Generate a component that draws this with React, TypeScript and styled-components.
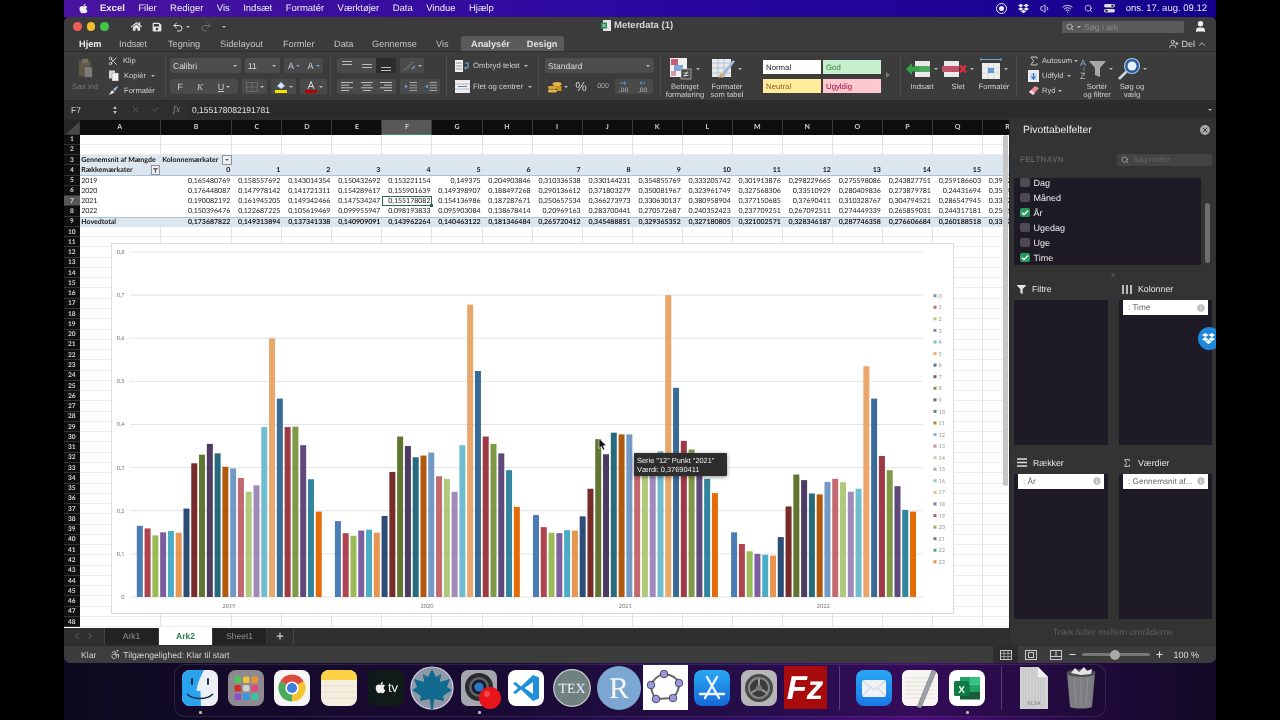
import React from 'react';
import styled, { createGlobalStyle } from 'styled-components';
import { FaApple, FaDropbox, FaHome, FaSave, FaFilter } from 'react-icons/fa';
import { Undo2, Redo2, Scissors, X, Check, Plus, Minus, Search, ChevronLeft, ChevronRight, ChevronUp, Sigma, Accessibility, Wifi, Volume1, Info, UserPlus, User } from 'lucide-react';

const Global = createGlobalStyle`
  html, body { margin: 0; padding: 0; background: #000; width: 1280px; height: 720px; overflow: hidden; }
  * { box-sizing: border-box; }
  body { font-family: "Liberation Sans", Arial, sans-serif; text-rendering: geometricPrecision; }
`;

const Screen = styled.div`
  width: 1152px; height: 720px; margin: 0 auto; display: flex; flex-direction: column; overflow: hidden;
  position: relative; filter: blur(0.3px); background: #1a0a33;
`;
const MenuBar = styled.div`
  height: 17px; flex: none; display: flex; align-items: center; padding: 0 9px 0 14px; color: #eee; font-size: 9.5px;
  background: linear-gradient(90deg, #4a14a0, #2a08a0 50%, #14008c);
`;
const MenuItem = styled.span<{ $bold?: boolean; $ml?: number }>`
  font-weight: ${p => (p.$bold ? 700 : 400)}; margin-left: ${p => p.$ml ?? 13.4}px; white-space: nowrap;
`;
const MenuRight = styled.div`
  margin-left: auto; display: flex; align-items: center; gap: 11px; font-size: 9.5px; color: #e8e8ee;
`;
const RecordDot = styled.span`
  width: 11px; height: 11px; border-radius: 50%; border: 1.5px solid #eee; display: flex; align-items: center; justify-content: center;
  &::after { content: ''; width: 5px; height: 5px; border-radius: 50%; background: #eee; }
`;
const Window = styled.div`
  height: 646px; flex: none; display: flex; flex-direction: column; background: #3a3a3a; border-radius: 6px 6px 7px 7px; overflow: hidden; position: relative;
`;
const TitleBar = styled.div`
  height: 19px; flex: none; display: flex; align-items: center; position: relative; padding-left: 9px; background: #3b3b3b; color: #ddd;
`;
const Light = styled.span<{ $c: string }>`
  width: 8.5px; height: 8.5px; border-radius: 50%; background: ${p => p.$c}; margin-right: 5px; flex: none;
`;
const QuickIcons = styled.div`
  display: flex; align-items: center; gap: 10px; margin-left: 17px; color: #ddd;
`;
const QuickBtn = styled.span<{ $dim?: boolean }>`
  display: flex; align-items: center; gap: 2px; color: ${p => (p.$dim ? '#6e6e6e' : '#e2e2e2')};
`;
const Caret = styled.span<{ $c?: string }>`
  width: 0; height: 0; flex: none; border-left: 2px solid transparent; border-right: 2px solid transparent; border-top: 2.5px solid ${p => p.$c ?? '#bbb'};
`;
const DocTitle = styled.div`
  position: absolute; left: 537px; top: 3px; display: flex; align-items: center; gap: 3px; font-size: 9.5px; font-weight: 700; color: #d6d6d6;
`;
const SheetSearch = styled.div`
  margin-left: auto; margin-right: 32px; width: 122px; height: 12px; background: #5a5a5a; border-radius: 1px; display: flex; align-items: center; gap: 3px; padding-left: 4px; font-size: 8.5px; color: #8c8c8c;
`;
const TitleUser = styled.span`
  position: absolute; right: 9px; top: 3px; color: #eee; display: flex;
`;
const TabRow = styled.div`
  height: 15px; flex: none; display: flex; align-items: stretch; background: #3b3b3b; font-size: 9.2px; color: #c4c4c4; padding-left: 15px; position: relative;
`;
const Tab = styled.span<{ $active?: boolean; $w: number }>`
  width: ${p => p.$w}px; flex: none; display: flex; align-items: center; white-space: nowrap;
  font-weight: ${p => (p.$active ? 700 : 400)}; color: ${p => (p.$active ? '#f0f0f0' : 'inherit')};
`;
const ContextTabs = styled.div`
  display: flex; align-items: center; margin-left: 25px; padding-left: 10px; width: 103px; background: #5b5b5b; border-radius: 3px 3px 0 0; color: #e4e4e4; font-weight: 700;
`;
const ContextTab = styled.span`
  margin-right: 17px; white-space: nowrap;
`;
const ShareBox = styled.div`
  position: absolute; right: 9px; top: 0; height: 15px; display: flex; align-items: center; gap: 2px; color: #d8d8d8; font-size: 9px;
`;
const Ribbon = styled.div`
  height: 49px; flex: none; display: flex; align-items: stretch; background: #3c3c3c; border-top: 1px solid #2f2f2f; font-size: 7.6px; color: #c8c8c8;
`;
const Sep = styled.span`
  width: 1px; flex: none; background: #4c4c4c; margin: 3px 0;
`;
const Group = styled.div<{ $w: number; $pl?: number }>`
  width: ${p => p.$w}px; flex: none; padding-left: ${p => p.$pl ?? 0}px; display: flex; align-items: stretch; position: relative;
`;
const PasteCol = styled.div`
  width: 44px; display: flex; flex-direction: column; align-items: center; padding-top: 6px; color: #777; gap: 4px; padding-right: 2px;
`;
const SmallCol = styled.div`
  display: flex; flex-direction: column; justify-content: space-between; padding: 2px 0 2px; height: 47px;
`;
const SmallBtn = styled.div<{ $gap?: number }>`
  display: flex; align-items: center; gap: ${p => p.$gap ?? 5}px; white-space: nowrap; color: #d0d0d0; height: 13px;
`;
const CaretGap = styled.span`
  margin-left: 2px; display: flex;
`;
const StackCol = styled.div<{ $gap?: number }>`
  display: flex; flex-direction: column; gap: ${p => p.$gap ?? 6}px; padding-top: 6px;
`;
const RowFlex = styled.div<{ $gap?: number }>`
  display: flex; align-items: center; gap: ${p => p.$gap ?? 4}px;
`;
const SelectBox = styled.div<{ $w: number }>`
  width: ${p => p.$w}px; height: 15px; background: #4d4d4d; border-radius: 2px; display: flex; align-items: center; justify-content: space-between; padding: 0 4px 0 3px; font-size: 8.5px; color: #dcdcdc;
`;
const Seg = styled.div<{ $w: number; $on?: boolean }>`
  width: ${p => p.$w}px; height: 15px; flex: none; background: ${p => (p.$on ? '#2c2c2c' : '#4a4a4a')}; display: flex; align-items: center; justify-content: center; gap: 2px; color: #c9c9c9; font-size: 9px;
  &:first-child { border-radius: 2px 0 0 2px; }
  &:last-child { border-radius: 0 2px 2px 0; }
`;
const PlainBtn = styled.div<{ $w: number }>`
  width: ${p => p.$w}px; height: 15px; flex: none; display: flex; align-items: center; justify-content: center; gap: 2px;
`;
const SegGroup = styled.div`
  display: flex;
`;
const Italic = styled.span`
  font-family: "Liberation Serif", serif; font-style: italic;
`;
const Under = styled.span`
  text-decoration: underline;
`;
const Percent = styled.span`
  font-size: 13px; color: #d4d4d4;
`;
const Tiny = styled.span`
  font-size: 7px; color: #aaa;
`;
const WrapRow = styled.div`
  display: flex; align-items: center; gap: 3px; white-space: nowrap; font-size: 7.8px; color: #d0d0d0; height: 19px;
`;
const WrapCol = styled.div`
  display: flex; flex-direction: column; padding-top: 4px; gap: 2px;
`;
const BigBtn = styled.div<{ $w: number }>`
  width: ${p => p.$w}px; flex: none; display: flex; flex-direction: column; align-items: center; padding-top: 5px; line-height: 8.4px; text-align: center; color: #cfcfcf; white-space: pre-line;
`;
const BigIconRow = styled.div`
  display: flex; align-items: center; gap: 2px; height: 23px; margin-bottom: 2.5px;
`;
const StylesBox = styled.div`
  display: grid; grid-template-columns: 58px 58px; grid-auto-rows: 14px; gap: 5px 2px; margin: 8px 0 0 16px; height: 33px;
`;
const StyleCell = styled.div<{ $bg: string; $c: string }>`
  background: ${p => p.$bg}; color: ${p => p.$c}; font-size: 7.8px; display: flex; align-items: center; padding-left: 3px;
`;
const StylesArrow = styled.span`
  margin: 20px 0 0 5px; width: 0; height: 0; border-top: 3px solid transparent; border-bottom: 3px solid transparent; border-left: 4px solid #777;
`;
const FormulaBar = styled.div`
  height: 19px; flex: none; display: flex; align-items: center; background: #2f2f2f; font-size: 8.5px; color: #ddd; border-top: 1px solid #2a2a2a; padding-bottom: 1px;
`;
const CellRef = styled.span`
  width: 47px; padding-left: 7px; flex: none;
`;
const Stepper = styled.span`
  width: 8px; display: flex; flex-direction: column; gap: 2px; align-items: center; flex: none;
  &::before { content: ''; border-left: 2px solid transparent; border-right: 2px solid transparent; border-bottom: 3px solid #bbb; }
  &::after { content: ''; border-left: 2px solid transparent; border-right: 2px solid transparent; border-top: 3px solid #bbb; }
`;
const FxTools = styled.span`
  display: flex; align-items: center; gap: 11px; margin-left: 12px; width: 56px; color: #666; flex: none;
`;
const Fx = styled.span`
  font-family: "Liberation Serif", serif; font-style: italic; font-size: 10px; color: #8a8a8a; margin-left: 2px;
`;
const FormulaInput = styled.div`
  flex: 1; height: 16px; display: flex; align-items: center; justify-content: space-between; padding: 0 4px 0 5px; background: #2b2b2b; color: #e4e4e4;
`;
const Body = styled.div`
  flex: 1; min-height: 0; display: flex; background: #d8d8d8;
`;
const SheetCol = styled.div`
  width: 946px; flex: none; display: flex; flex-direction: column; background: #2c2c2c; padding-top: 1px;
`;
const SheetArea = styled.div`
  flex: none; height: 508px; position: relative; overflow: hidden; background: #fff;
  font-family: Lato, "Liberation Sans", sans-serif; font-size: 7px; color: #161616;
`;
const gridCols = '15.7px 81px 71.6px repeat(16, 50.05px) 50px';
const HeaderRow = styled.div`
  display: grid; grid-template-columns: ${gridCols}; height: 14.5px; background: #0e0e0e; color: #d2d2d2; font-weight: 700; font-size: 7px;
`;
const HeadCell = styled.div<{ $sel?: boolean }>`
  display: flex; align-items: center; justify-content: center; border-right: 1px solid #3a3a3a;
  background: ${p => (p.$sel ? '#585858' : 'transparent')}; border-bottom: ${p => (p.$sel ? '1px solid #3f8f60' : 'none')};
`;
const Corner = styled.div`
  height: 100%; background: #4a4a4a; clip-path: polygon(100% 10%, 100% 100%, 10% 100%);
`;
const CornerWrap = styled.div`
  background: #262626;
`;
const Row = styled.div<{ $shade?: boolean; $edge?: 'top' | 'bottom' }>`
  display: grid; grid-template-columns: ${gridCols}; height: 10.28px;
  background: ${p => (p.$shade ? '#dce6ef' : '#fff')};
  box-shadow: ${p => (p.$edge === 'top' ? 'inset 0 1px 0 #aec3d6' : p.$edge === 'bottom' ? 'inset 0 -1px 0 #aec3d6' : 'none')};
`;
const RowHead = styled.div<{ $sel?: boolean }>`
  display: flex; align-items: center; justify-content: center; background: ${p => (p.$sel ? '#585858' : '#101010')}; color: #d8d8d8; font-weight: 700; font-size: 6.6px; border-bottom: 1px solid #333;
`;
const Cell = styled.div<{ $bold?: boolean; $grid?: boolean; $left?: boolean; $sel?: boolean }>`
  display: flex; align-items: center; justify-content: ${p => (p.$left ? 'flex-start' : 'flex-end')}; position: relative; white-space: nowrap; min-width: 0;
  padding: ${p => (p.$left ? '0 0 0 1.5px' : '0 2px 0 0')}; font-weight: ${p => (p.$bold ? 700 : 400)};
  border-right: ${p => (p.$grid ? '1px solid #e2e2e2' : 'none')}; border-bottom: ${p => (p.$grid ? '1px solid #ececec' : 'none')};
  outline: ${p => (p.$sel ? '1.3px solid #2a6a48' : 'none')}; outline-offset: -1px;
`;
const FillHandle = styled.span`
  position: absolute; right: -1px; bottom: -1px; width: 3px; height: 3px; background: #2a6a48;
`;
const PivotBtn = styled.span`
  position: absolute; top: 0; right: 0.5px; width: 9.5px; height: 9.5px; background: #eef1f4; border: 1px solid #8d949b; display: flex; align-items: center; justify-content: center; color: #666;
`;
const Chart = styled.div`
  position: absolute; left: 48px; top: 124px; width: 841px; height: 369px; background: #fff; outline: 1px solid #dcdcdc;
`;
const ChartSvg = styled.svg`
  display: block; width: 841px; height: 369px;
`;
const Tooltip = styled.div`
  position: absolute; left: 522px; top: 209px; width: 93px; height: 23px; background: #2d2d2d; color: #eee; font-family: "Liberation Sans", sans-serif; font-size: 7.4px; line-height: 9.6px; padding: 2.5px 3px; box-shadow: 0 1px 4px rgba(0,0,0,.45); border-radius: 1px; white-space: nowrap;
`;
const Pointer = styled.svg`
  position: absolute; left: 486px; top: 194px; width: 9px; height: 13px;
`;
const VScroll = styled.span`
  position: absolute; left: 939px; top: 15px; width: 5px; height: 351px; border-radius: 3px; background: #c6c6c6;
`;
const ScrollGutter = styled.span`
  position: absolute; right: 0; top: 0; bottom: 0; width: 1.5px; background: #262626;
`;
const TabStrip = styled.div`
  flex: none; height: 17px; display: flex; align-items: stretch; background: #2f2f2f; font-size: 8.6px; color: #8a8a8a; margin-top: -0.5px;
`;
const NavArrows = styled.div`
  width: 41px; display: flex; align-items: center; gap: 3px; padding-left: 8px; color: #6d6d6d; border-right: 1px solid #444;
`;
const SheetTab = styled.div<{ $active?: boolean }>`
  width: 54px; display: flex; align-items: center; justify-content: center; font-weight: ${p => (p.$active ? 700 : 400)};
  background: ${p => (p.$active ? '#fff' : '#232323')}; color: ${p => (p.$active ? '#2f7d4f' : '#8d8d8d')}; border-right: 1px solid #3a3a3a;
`;
const AddTab = styled.div`
  width: 27px; display: flex; align-items: center; justify-content: center; color: #ccc; border-right: 1px solid #444;
`;
const Panel = styled.div`
  flex: 1; min-width: 0; display: flex; flex-direction: column; background: #333; color: #e6e6e6; position: relative; overflow: hidden;
`;
const PanelHead = styled.div`
  height: 21px; flex: none; display: flex; align-items: center; justify-content: space-between; padding: 1px 6px 0 13px; font-size: 10.4px; color: #ececec;
`;
const CloseBtn = styled.span`
  width: 10px; height: 10px; border-radius: 50%; background: #a8a8a8; color: #333; display: flex; align-items: center; justify-content: center;
`;
const FieldHead = styled.div`
  height: 13px; margin-top: 13px; flex: none; display: flex; align-items: center; justify-content: space-between; padding: 0 4px 0 10px; font-size: 8px; font-weight: 700; color: #5f5f5f; letter-spacing: .3px;
`;
const FieldSearch = styled.div`
  width: 95px; height: 12px; background: #444; border-radius: 3px; display: flex; align-items: center; gap: 4px; padding-left: 4px; font-size: 7.6px; font-weight: 400; letter-spacing: 0; color: #666;
  svg { color: #bbb; }
`;
const FieldWrap = styled.div`
  margin-top: 12px; flex: none; display: flex; height: 87px; padding-left: 4px;
`;
const FieldList = styled.div`
  width: 187px; background: #1f1b26; overflow: hidden; display: flex; flex-direction: column; justify-content: flex-end; padding-left: 6px;
`;
const FieldRow = styled.div`
  height: 15px; flex: none; display: flex; align-items: center; gap: 4px; font-size: 9px; color: #ececec;
`;
const Check9 = styled.span<{ $on?: boolean }>`
  width: 9.5px; height: 9.5px; border-radius: 2px; background: ${p => (p.$on ? '#2a9a5c' : '#4d4955')}; display: flex; align-items: center; justify-content: center; color: #fff;
`;
const PanelThumb = styled.span`
  width: 5px; height: 60px; border-radius: 3px; background: #6e6e6e; align-self: flex-end; margin: 0 0 2px 4px;
`;
const Grip = styled.span`
  width: 4px; height: 4px; border-radius: 50%; background: #4c4c4c; align-self: center; margin: 8px 0 5px; flex: none;
`;
const Areas = styled.div`
  display: grid; grid-template-columns: 94px 93px; column-gap: 11px; row-gap: 10.5px; padding-left: 4px; flex: none;
`;
const AreaCell = styled.div`
  display: flex; flex-direction: column;
`;
const AreaLabel = styled.div`
  height: 14px; margin-bottom: 4px; display: flex; align-items: center; gap: 6px; padding-left: 3px; font-size: 8.8px; color: #e6e6e6;
`;
const AreaBox = styled.div`
  height: 145px; background: #1f1b26; padding: 0 4px;
`;
const AreaTag = styled.div`
  height: 15px; background: #fff; color: #666; font-size: 8.2px; display: flex; align-items: center; padding: 0 2px 0 5px; gap: 3px;
  svg { margin-left: auto; }
`;
const BarsIcon = styled.svg`
  color: #ddd; flex: none;
`;
const PanelFoot = styled.div`
  flex: 1; display: flex; align-items: center; justify-content: center; font-size: 9px; color: #5e5e5e;
`;
const DropboxBadge = styled.div`
  position: absolute; left: 188px; top: 208px; width: 23px; height: 23px; border-radius: 50%; background: #1e88dc; color: #fff; display: flex; align-items: center; justify-content: flex-start; padding-left: 4px;
`;
const StatusBar = styled.div`
  height: 18px; flex: none; display: flex; align-items: center; background: #3c3c3c; font-size: 8.6px; color: #d2d2d2; padding-left: 17px; border-top: 1px solid #2b2b2b;
`;
const AccessText = styled.span`
  display: flex; align-items: center; gap: 2px; margin-left: 14px;
`;
const StatusRight = styled.div`
  margin-left: auto; display: flex; align-items: center; color: #ddd; padding-right: 17px;
`;
const ViewBtn = styled.span<{ $on?: boolean }>`
  width: 25px; height: 17px; display: flex; align-items: center; justify-content: center; background: ${p => (p.$on ? '#2d2d2d' : 'transparent')};
`;
const SliderTrack = styled.span`
  width: 68px; height: 2.5px; margin: 0 5px; border-radius: 2px; background: #777; position: relative;
`;
const SliderKnob = styled.span`
  position: absolute; left: 28px; top: -3.5px; width: 10px; height: 10px; border-radius: 50%; background: #a8a8a8;
`;
const Zoom = styled.span`
  margin-left: 9px; font-size: 9px;
`;
const Desktop = styled.div`
  flex: 1; min-height: 0; position: relative; padding-left: 110px; padding-top: 0.5px; background: linear-gradient(90deg, #0d0a1e, #1a0a38 35%, #34106a 62%, #4d0c80 74%, #1c0a36 92%, #120a26);
`;
const Dock = styled.div`
  width: 932px; height: 53px; display: flex; align-items: center; padding: 0 0 5px 7px; border-radius: 11px; border: 1px solid rgba(255,255,255,.1); background: rgba(25,12,45,.45);
`;
const DockIcon = styled.div<{ $w: number; $ml: number; $dot?: boolean }>`
  width: ${p => p.$w}px; flex: none; margin-left: ${p => p.$ml}px; position: relative; display: flex; justify-content: center;
  &::after { content: ''; display: ${p => (p.$dot ? 'block' : 'none')}; position: absolute; left: 50%; bottom: -8px; width: 2.5px; height: 2.5px; margin-left: -1px; border-radius: 50%; background: #bbb; }
`;
const DockSvg = styled.svg`
  display: block; width: 100%; height: auto; overflow: visible;
`;
const DockSep = styled.span<{ $ml: number }>`
  width: 1px; height: 44px; flex: none; background: rgba(255,255,255,.22); margin-left: ${p => p.$ml}px;
`;
const TvTile = styled.div`
  width: 36px; height: 36px; border-radius: 8px; background: #101a18; color: #f0f0f0; display: flex; align-items: center; justify-content: center; gap: 1px; font-size: 13px;
`;

const vals: Record<number, string[]> = {
  5: ['0,165480769','0,158557692','0,143014354','0,150432692','0,153221154','0,149375','0,204903846','0,310336538','0,330144231','0,354855769','0,333205742','0,301913876','0,298229665','0,275598086','0,243827751','0,259186603','0,394230769'],
  6: ['0,176448087','0,147978142','0,141721311','0,154289617','0,155901639','0,149398907','0,188497268','0,290136612','0,371803279','0,350081967','0,323961749','0,327568306','0,33510929','0,280409836','0,273879781','0,24431694','0,352459016'],
  7: ['0,190082192','0,161945205','0,149342466','0,147534247','0,155178082','0,154136986','0,187287671','0,250657534','0,366273973','0,330630137','0,380958904','0,377150685','0,37690411','0,310328767','0,304794521','0,286547945','0,338219178'],
  8: ['0,150396476','0,122687225','0,105619469','0,099955947','0,098193833','0,095903084','0,138678414','0,20969163','0,283700441','0,270572687','0,240352423','0,237709251','0,267092511','0,274449339','0,265859031','0,244317181','0,250660793'],
  9: ['0,173687822','0,149313894','0,137341338','0,140909091','0,143962264','0,140463122','0,181346484','0,265720412','0,345488851','0,329365352','0,327180805','0,321002571','0,328346187','0,287746358','0,276606684','0,260188518','0,335763293'],
};
const rowLabels: Record<number, string> = { 5: '2019', 6: '2020', 7: '2021', 8: '2022', 9: 'Hovedtotal' };
const columns = 'ABCDEFGHIJKLMNOPQR'.split('');
const series = ['#4a7db5','#b0444e','#9bbb59','#7d5fa0','#4bacc6','#e8954f','#2c4d75','#772c2a','#5f7530','#4d3b62','#276a7c','#b05a10','#7299c6','#c26a70','#afc97a','#9f8ab9','#6fbdd1','#e9a76b','#3a6a96','#9e3a44','#7f9a46','#604a7b','#31859c','#e36c09'];
const chartData = [
  [.165,.159,.143,.150,.153,.149,.205,.310,.330,.355,.333,.302,.298,.276,.244,.259,.394,.600,.460,.394,.395,.352,.273,.198],
  [.176,.148,.142,.154,.156,.149,.188,.290,.372,.350,.324,.328,.335,.280,.274,.244,.352,.678,.524,.372,.355,.333,.294,.209],
  [.190,.162,.149,.148,.155,.154,.187,.251,.366,.331,.381,.377,.377,.310,.305,.287,.338,.700,.485,.362,.342,.320,.274,.241],
  [.150,.123,.106,.100,.098,.096,.139,.210,.284,.271,.240,.238,.267,.274,.266,.244,.251,.535,.460,.327,.294,.257,.202,.198],
];
const years = ['2019','2020','2021','2022'];

const BarChart = () => (
  <ChartSvg viewBox="112 244 841 369">
    {[0,1,2,3,4,5,6,7,8].map(i => {
      const y = 597 - i * 43.13;
      return (
        <g key={i}>
          <line x1="130" x2="923" y1={y} y2={y} stroke="#e4e4e4" strokeWidth="1" />
          <text x="124.5" y={y + 2} fontSize="5.6" fill="#777" textAnchor="end" fontFamily="Lato, sans-serif">{i === 0 ? '0' : `0,${i}`}</text>
        </g>
      );
    })}
    {chartData.map((g, gi) => g.map((v, i) => (
      <rect key={`${gi}-${i}`} x={136.8 + gi * 198.1 + i * 7.78} y={597 - v * 431.3} width="6" height={v * 431.3} fill={series[i]} />
    )))}
    {years.map((yr, i) => (
      <text key={yr} x={229 + i * 198.1} y="607.5" fontSize="5.6" fill="#777" textAnchor="middle" fontFamily="Lato, sans-serif">{yr}</text>
    ))}
    {series.map((c, i) => (
      <g key={c}>
        <rect x="933.5" y={294.2 + i * 11.57} width="3" height="3" fill={c} opacity=".8" />
        <text x="938.5" y={297.8 + i * 11.57} fontSize="5.6" fill="#999" fontFamily="Lato, sans-serif">{i}</text>
      </g>
    ))}
  </ChartSvg>
);

const Sheet = () => (
  <SheetArea>
    <HeaderRow>
      <CornerWrap><Corner /></CornerWrap>
      {columns.map(c => <HeadCell key={c} $sel={c === 'F'}>{c}</HeadCell>)}
    </HeaderRow>
    {Array.from({ length: 48 }, (_, k) => k + 1).map(r => {
      const shade = r === 3 || r === 4 || r === 9;
      const isPivot = r >= 3 && r <= 9;
      const grid = !isPivot;
      return (
        <Row key={r} $shade={shade} $edge={r === 4 ? 'bottom' : r === 9 ? 'top' : undefined}>
          <RowHead $sel={r === 7}>{r}</RowHead>
          {columns.map((c, i) => {
            if (r === 3 && i === 0) return <Cell key={c} $left $bold>Gennemsnit af Mængde</Cell>;
            if (r === 3 && i === 1) return <Cell key={c} $left $bold>Kolonnemærkater<PivotBtn><Caret $c="#666" /></PivotBtn></Cell>;
            if (r === 4 && i === 0) return <Cell key={c} $left $bold>Rækkemærkater<PivotBtn><FaFilter size={5} /></PivotBtn></Cell>;
            if (r === 4 && i > 0) return <Cell key={c} $bold>{i - 1}</Cell>;
            if (vals[r] && i === 0) return <Cell key={c} $left $bold={r === 9}>{rowLabels[r]}</Cell>;
            if (vals[r]) {
              const sel = r === 7 && c === 'F';
              return <Cell key={c} $bold={r === 9} $sel={sel}>{vals[r][i - 1]}{sel && <FillHandle />}</Cell>;
            }
            return <Cell key={c} $grid={grid} />;
          })}
        </Row>
      );
    })}
    <Chart>
      <BarChart />
      <Tooltip>Serie "12" Punkt "2021"<br />Værdi: 0,37690411</Tooltip>
      <Pointer viewBox="0 0 9 13"><path d="M1 0.5 L1 10.5 L3.4 8.4 L5 12 L6.8 11.2 L5.2 7.8 L8.4 7.6 Z" fill="#111" stroke="#fff" strokeWidth=".6" /></Pointer>
    </Chart>
    <VScroll />
    <ScrollGutter />
  </SheetArea>
);

const Lines = ({ widths, dir = 'h', color = '#c9c9c9' }: { widths: number[]; dir?: string; color?: string }) => (
  <svg width="12" height="9" viewBox="0 0 12 9">
    {widths.map((w, i) => {
      const x = dir === 'c' ? (12 - w) / 2 : dir === 'r' ? 12 - w : 0;
      return <rect key={i} x={x} y={i * (8 / (widths.length - 1 || 1))} width={w} height=".9" fill={color} />;
    })}
  </svg>
);
const VLines = ({ top }: { top: number }) => (
  <svg width="12" height="11" viewBox="0 0 12 11">
    <rect x="1" y={top} width="10" height="1" fill="#b8b8b8" />
    <rect x="1" y={top + 3} width="10" height="1" fill="#b8b8b8" />
  </svg>
);
const IndentIcon = ({ flip }: { flip?: boolean }) => (
  <svg width="13" height="9" viewBox="0 0 13 9">
    <path d={flip ? 'M4 4.5 L1 2.5 V6.5 Z' : 'M1 4.5 L4 2.5 V6.5 Z'} fill="#5fa3e0" />
    <path d="M5.5 0.5H13M5.5 3.2H13M5.5 5.9H13M5.5 8.5H13" stroke="#bcbcbc" strokeWidth=".8" />
  </svg>
);
const PasteIcon = () => (
  <svg width="15" height="20" viewBox="0 0 18 24"><rect x="1" y="3" width="14" height="19" rx="1" fill="#5f5848" /><rect x="5" y="1" width="7" height="5" fill="#77705f" /><rect x="8" y="11" width="9" height="12" fill="#7b7b7b" /></svg>
);
const CopyIcon = () => (
  <svg width="11" height="11" viewBox="0 0 11 11"><rect x="1" y="0.5" width="6" height="8" fill="#d8d8d8" /><rect x="4" y="3" width="6.5" height="8" fill="#f2f2f2" stroke="#777" strokeWidth=".4" /></svg>
);
const BrushIcon = () => (
  <svg width="11" height="11" viewBox="0 0 11 11"><path d="M1 10 L4 5 L6.5 7.5 Z" fill="#e8e8e8" /><path d="M5 4 L9.5 1 L10 1.7 L7 6.5 Z" fill="#9bb6d6" /></svg>
);
const OrientIcon = () => (
  <svg width="13" height="11" viewBox="0 0 13 11"><path d="M1 10 L9 2 M3 10 L11 2" stroke="#8a8a8a" strokeWidth="1" strokeDasharray="1.5 1" /><path d="M9 9 L12 6" stroke="#7aa5d6" strokeWidth="1.2" /></svg>
);
const BorderIcon = () => (
  <svg width="12" height="10" viewBox="0 0 12 10"><rect x=".5" y=".5" width="11" height="9" fill="none" stroke="#6a6a6a" /><path d="M6 0V10M0 5H12" stroke="#6a6a6a" /></svg>
);
const ViewGlyph = ({ kind }: { kind: number }) => (
  <svg width="12" height="10" viewBox="0 0 12 10">
    <rect x=".5" y=".5" width="11" height="9" fill="none" stroke="#c8c8c8" />
    {kind === 0 && <path d="M4 0V10M8 0V10M0 3.3H12M0 6.6H12" stroke="#c8c8c8" strokeWidth=".7" />}
    {kind === 1 && <rect x="3.5" y="2.5" width="5" height="5" fill="none" stroke="#c8c8c8" />}
    {kind === 2 && <path d="M0 6.5H12M6 0V6.5" stroke="#c8c8c8" />}
  </svg>
);
const FillIcon = () => (
  <svg width="12" height="12" viewBox="0 0 12 12"><path d="M2 5 L6 1 L10 5 L6 8 Z" fill="#d9e5f2" stroke="#5c88c4" strokeWidth=".6" /><rect x="0" y="9" width="12" height="3" fill="#f3e400" /></svg>
);
const FontColorIcon = () => (
  <svg width="12" height="12" viewBox="0 0 12 12"><path d="M3 8 L6 0.5 L9 8 M4 5.5 H8" fill="none" stroke="#ddd" strokeWidth="1" /><rect x="0" y="9" width="12" height="3" fill="#c00000" /></svg>
);
const WrapIcon = () => (
  <svg width="15" height="12" viewBox="0 0 15 12"><rect x="0" y="0" width="8" height="12" fill="#efefef" /><path d="M1 3H7M1 6H7M1 9H7" stroke="#777" strokeWidth=".7" /><path d="M10 3 H13 V8 H10" fill="none" stroke="#6ea7dd" strokeWidth="1.2" /><path d="M11 6 L9 8 L11 10" fill="#6ea7dd" /></svg>
);
const MergeIcon = () => (
  <svg width="15" height="13" viewBox="0 0 15 13"><rect x="0" y="0" width="15" height="13" fill="#eee" /><path d="M0 4H15M0 9H15" stroke="#999" strokeWidth=".6" /><path d="M3 6.5H12" stroke="#5a86c0" strokeWidth="1" /></svg>
);
const CoinsIcon = () => (
  <svg width="15" height="12" viewBox="0 0 15 12"><ellipse cx="10" cy="3" rx="4.5" ry="2" fill="#e6b84a" /><rect x="1" y="5" width="9" height="3" rx="1.5" fill="#d9a532" /><rect x="1" y="8.5" width="9" height="3" rx="1.5" fill="#e6b84a" /><rect x="10" y="5" width="4.5" height="5" fill="#c99522" /></svg>
);
const DecIcon = ({ flip }: { flip?: boolean }) => (
  <svg width="13" height="12" viewBox="0 0 13 12"><path d={flip ? 'M8 2H3M5 0L3 2L5 4' : 'M2 2H8M6 0L8 2L6 4'} stroke="#4a93d8" fill="none" strokeWidth="1" /><text x="1" y="11" fontSize="6.5" fill="#bbb" fontFamily="Liberation Sans">,00</text></svg>
);
const CondIcon = () => (
  <svg width="24" height="23" viewBox="0 0 24 23"><rect x="0" y="1" width="17" height="19" fill="#f0f0f0" /><rect x="1" y="2" width="7" height="6" fill="#c75f74" /><rect x="4" y="8" width="9" height="6" fill="#7ba5dc" /><rect x="1" y="14" width="5" height="5" fill="#d59aa8" /><rect x="11" y="12" width="10" height="10" fill="#4a4a4a" stroke="#ddd" strokeWidth=".6" /><path d="M13.5 16H18.5M13.5 18.5H18.5M17.5 14.5L14.5 20" stroke="#eee" strokeWidth=".8" /></svg>
);
const TableIcon = () => (
  <svg width="24" height="23" viewBox="0 0 24 23"><rect x="0" y="2" width="19" height="18" fill="#e8e8e8" /><path d="M0 6H19M0 11H19M0 16H19M6 2V20M12 2V20" stroke="#9fb5cf" strokeWidth=".7" /><path d="M8 20 L12 14 L21 3 L23 4.5 L15 15 L11 21 Z" fill="#a2b9d6" /><path d="M6 21 L9 16 L12 19 Z" fill="#e4ab4e" /></svg>
);
const InsertIcon = () => (
  <svg width="26" height="20" viewBox="0 0 26 20"><rect x="9" y="2" width="15" height="16" fill="#e9e9e9" /><rect x="9" y="7" width="15" height="6" fill="#55a85f" /><path d="M0 10 L6 4 V7.5 H13 V12.5 H6 V16 Z" fill="#35a24a" /></svg>
);
const DeleteIcon = () => (
  <svg width="26" height="20" viewBox="0 0 26 20"><rect x="2" y="2" width="15" height="16" fill="#e9e9e9" /><rect x="0" y="7" width="17" height="6" fill="#c2506a" /><path d="M18 6.5 L24 13.5 M24 6.5 L18 13.5" stroke="#d8303e" strokeWidth="2.4" /></svg>
);
const FormatIcon = () => (
  <svg width="22" height="22" viewBox="0 0 22 22"><path d="M1 1.5H21M1 0V3M21 0V3" stroke="#6ea7dd" strokeWidth="1" /><rect x="2" y="5" width="18" height="16" fill="#eee" /><path d="M8 5V21M14 5V21M2 10H20M2 15H20" stroke="#ccc" strokeWidth=".6" /><rect x="8" y="10" width="6" height="5" fill="#5c9ad8" /></svg>
);
const FillDownIcon = () => (
  <svg width="11" height="12" viewBox="0 0 11 12"><rect width="11" height="12" fill="#eee" /><rect x="2" y="3" width="7" height="7" fill="#c9d9ef" /><path d="M5.5 3V8M3.5 6.5L5.5 9L7.5 6.5" stroke="#2f6fc0" fill="none" strokeWidth="1.2" /></svg>
);
const EraserIcon = () => (
  <svg width="12" height="11" viewBox="0 0 12 11"><path d="M1 7 L7 1 L11 3 L5 10 Z" fill="#e48a9a" /><path d="M1 7 L3 5 L7 8 L5 10 Z" fill="#f4d4da" /></svg>
);
const SortIcon = () => (
  <svg width="27" height="23" viewBox="0 0 27 23"><text x="0" y="9" fontSize="9" fill="#7fa8d4" fontFamily="Liberation Sans">A</text><path d="M4 10V14" stroke="#9db" strokeWidth=".6" /><text x="0" y="22" fontSize="9" fill="#bbb" fontFamily="Liberation Sans">Z</text><path d="M9 4 H26 L20 11 V20 L15 18 V11 Z" fill="#a8a8a8" /></svg>
);
const FindIcon = () => (
  <svg width="24" height="24" viewBox="0 0 24 24"><circle cx="15" cy="9" r="7.5" fill="#2a5a9a" stroke="#a8c8ea" strokeWidth="1.2" /><circle cx="15" cy="9" r="4.5" fill="#e8f2fc" /><path d="M9.5 14.5 L2 22" stroke="#c8d4e0" strokeWidth="2.6" /></svg>
);
const ColsGlyph = () => (
  <BarsIcon width="10" height="9" viewBox="0 0 10 9"><path d="M1 0V9M5 0V9M9 0V9" stroke="currentColor" strokeWidth="1.6" /></BarsIcon>
);
const RowsGlyph = () => (
  <BarsIcon width="10" height="9" viewBox="0 0 10 9"><path d="M0 1H10M0 4.5H10M0 8H10" stroke="currentColor" strokeWidth="1.4" /></BarsIcon>
);
const DocGlyph = () => (
  <svg width="10" height="11" viewBox="0 0 10 11"><rect x="2" y="0" width="8" height="11" fill="#e6e6e6" /><rect x="0" y="2.5" width="6" height="6" fill="#2e8b57" /><path d="M1.5 4L4.5 7M4.5 4L1.5 7" stroke="#fff" strokeWidth=".7" /></svg>
);
const CtlCenter = () => (
  <svg width="11" height="9" viewBox="0 0 11 9"><rect x="0" y="0" width="11" height="3.6" rx="1.8" fill="#ddd" /><rect x="0" y="5" width="11" height="3.6" rx="1.8" fill="#ddd" /><circle cx="8.5" cy="1.8" r="1.3" fill="#333" /><circle cx="2.5" cy="6.8" r="1.3" fill="#333" /></svg>
);
const TagInfo = () => <Info size={10} fill="#bdbdbd" color="#fff" />;

const Finder = () => (
  <DockSvg viewBox="0 0 36 36">
    <clipPath id="fc"><rect width="36" height="36" rx="8" /></clipPath>
    <g clipPath="url(#fc)">
      <rect width="36" height="36" fill="#ecf0f4" />
      <path d="M0 0 H22 C18 8 15 14 14.5 21 H18.5 L19 36 H0 Z" fill="#29a3ee" />
      <path d="M10 9V14M26 9V14" stroke="#1a3050" strokeWidth="2" strokeLinecap="round" />
      <path d="M5 24 C11 30 25 30 31 24" fill="none" stroke="#1a3050" strokeWidth="1.6" />
    </g>
  </DockSvg>
);
const Launchpad = () => {
  const c = ['#4cc85a','#f3c13a','#ee9333','#d92a2a','#cfcfcf','#e8457b','#8e4ed0','#2f9ae8','#38c9a4'];
  return (
    <DockSvg viewBox="0 0 36 36">
      <rect width="36" height="36" rx="8" fill="#8d8a90" />
      {c.map((f, i) => <rect key={f} x={6.5 + (i % 3) * 8.5} y={6.5 + Math.floor(i / 3) * 8.5} width="6.5" height="6.5" rx="1.6" fill={f} />)}
    </DockSvg>
  );
};
const Chrome = () => (
  <DockSvg viewBox="0 0 36 36">
    <rect width="36" height="36" rx="8" fill="#f6f6f6" />
    <path d="M18 18 L6.3 11.2 A13.5 13.5 0 0 1 29.7 11.2 Z" fill="#dd4a3e" />
    <path d="M18 18 L29.7 11.2 A13.5 13.5 0 0 1 18 31.5 Z" fill="#f4c430" />
    <path d="M18 18 L18 31.5 A13.5 13.5 0 0 1 6.3 11.2 Z" fill="#4aa95a" />
    <circle cx="18" cy="18" r="6.6" fill="#fff" /><circle cx="18" cy="18" r="5.1" fill="#3f7fe0" />
  </DockSvg>
);
const Notes = () => (
  <DockSvg viewBox="0 0 36 36">
    <clipPath id="nc"><rect width="36" height="36" rx="8" /></clipPath>
    <g clipPath="url(#nc)"><rect width="36" height="36" fill="#f4efdf" /><rect width="36" height="10" fill="#fbd243" />
      <path d="M0 16H36M0 22H36M0 28H36" stroke="#e2dccb" strokeWidth=".7" /></g>
  </DockSvg>
);
const Maple = () => (
  <DockSvg viewBox="0 0 44 44">
    <circle cx="22" cy="22" r="21" fill="#8f98a6" stroke="#d8d4ea" strokeWidth="1.2" />
    <path d="M22 3 L26 11 L31 8 L30 16 L40 13 L37 21 L42 24 L33 30 L34 35 L24 33 L23 43 L21 43 L20 33 L10 35 L11 30 L2 24 L7 21 L4 13 L14 16 L13 8 L18 11 Z" fill="#0f6a8e" />
  </DockSvg>
);
const Camera = () => (
  <DockSvg viewBox="0 0 36 36">
    <rect width="36" height="36" rx="7" fill="#a4a7ad" />
    <circle cx="18" cy="17" r="14" fill="#2c2c30" /><circle cx="18" cy="17" r="10" fill="#62646a" /><circle cx="18" cy="17" r="7.5" fill="#1c1c22" /><circle cx="18" cy="17" r="4.6" fill="#2b78c8" />
    <circle cx="29" cy="28" r="11" fill="#e8141c" />
    <circle cx="26" cy="24" r="3" fill="#ff6a6a" opacity=".6" />
  </DockSvg>
);
const VSCode = () => (
  <DockSvg viewBox="0 0 36 36">
    <rect width="36" height="36" rx="8" fill="#fff" />
    <path fillRule="evenodd" d="M25 5 L13 16.5 L7.5 12 L5 13.5 L10 18 L5 22.5 L7.5 24 L13 19.5 L25 31 L31 28.5 V7.5 Z M25 12 V24 L16.5 18 Z" fill="#1f8fd8" />
  </DockSvg>
);
const Tex = () => (
  <DockSvg viewBox="0 0 38 38">
    <circle cx="19" cy="19" r="18.3" fill="#6f8280" stroke="#c7cfcd" strokeWidth="1.2" />
    <text x="19" y="24" textAnchor="middle" fontFamily="Liberation Serif, serif" fontSize="14" fill="#eef">TEX</text>
  </DockSvg>
);
const RLogo = () => (
  <DockSvg viewBox="0 0 44 44">
    <circle cx="22" cy="22" r="22" fill="#7ca7d2" />
    <text x="22" y="32" textAnchor="middle" fontFamily="Liberation Serif, serif" fontSize="30" fill="#f4f6fa">R</text>
  </DockSvg>
);
const GeoGebra = () => {
  const p = [[21,9],[36,18],[30,33],[13,34],[8,20]];
  return (
    <DockSvg viewBox="0 0 45 45">
      <rect width="45" height="45" fill="#fff" />
      <path d="M21 9 C30 10 34 13 36 18 C36 25 33 30 30 33 L13 34 C10 30 8 25 8 20 C10 15 15 10 21 9 Z" fill="none" stroke="#6a6a6a" strokeWidth="2" />
      {p.map(([x, y]) => <circle key={x} cx={x} cy={y} r="3.8" fill="#9a96e0" stroke="#333" strokeWidth=".8" />)}
    </DockSvg>
  );
};
const AppStore = () => (
  <DockSvg viewBox="0 0 36 36">
    <defs><linearGradient id="as" x1="0" y1="0" x2="0" y2="1"><stop offset="0" stopColor="#2aa8f0" /><stop offset="1" stopColor="#1668d8" /></linearGradient></defs>
    <rect width="36" height="36" rx="8" fill="url(#as)" />
    <path d="M13 7 L25 28 M23 7 L11 28 M6 24 H30" stroke="#eef6fd" strokeWidth="2.4" strokeLinecap="round" />
  </DockSvg>
);
const Settings = () => (
  <DockSvg viewBox="0 0 36 36">
    <rect width="36" height="36" rx="8" fill="#b6b6b6" />
    <circle cx="18" cy="18" r="14" fill="#4a4a4a" /><circle cx="18" cy="18" r="11" fill="#888" /><circle cx="18" cy="18" r="9" fill="#3c3c3c" />
    <path d="M18 18 V9 M18 18 L10 23 M18 18 L26 23" stroke="#9a9a9a" strokeWidth="2" /><circle cx="18" cy="18" r="3" fill="#777" />
  </DockSvg>
);
const FileZilla = () => (
  <DockSvg viewBox="0 0 43 43">
    <rect width="43" height="43" fill="#a80b0b" />
    <text x="21" y="33" textAnchor="middle" fontFamily="Liberation Sans, sans-serif" fontWeight="700" fontStyle="italic" fontSize="33" fill="#fff">Fz</text>
  </DockSvg>
);
const Mail = () => (
  <DockSvg viewBox="0 0 36 36">
    <defs><linearGradient id="ml" x1="0" y1="0" x2="0" y2="1"><stop offset="0" stopColor="#2aa8f4" /><stop offset="1" stopColor="#1a78e6" /></linearGradient></defs>
    <rect width="36" height="36" rx="8" fill="url(#ml)" />
    <rect x="6" y="10" width="24" height="17" rx="2" fill="#eef1f5" />
    <path d="M6.5 11 L18 20 L29.5 11 M6.5 26 L14 18 M29.5 26 L22 18" fill="none" stroke="#b8c0cc" strokeWidth=".8" />
  </DockSvg>
);
const TextEdit = () => (
  <DockSvg viewBox="0 0 36 36">
    <rect width="36" height="36" rx="6" fill="#f8f6f2" />
    <path d="M3 8H33M3 12H33M3 16H33M3 20H33M3 24H33M3 28H33" stroke="#d8d4cc" strokeWidth=".7" />
    <path d="M15 37 L30 0 L34 2 L19 38 Z" fill="#9aa0a8" stroke="#666" strokeWidth=".4" />
  </DockSvg>
);
const ExcelLogo = () => (
  <DockSvg viewBox="0 0 36 36">
    <rect width="36" height="36" rx="8" fill="#fff" />
    <rect x="11" y="7" width="10" height="7.5" fill="#21a366" /><rect x="21" y="7" width="10" height="7.5" fill="#33c481" />
    <rect x="11" y="14.5" width="10" height="7.5" fill="#107c41" /><rect x="21" y="14.5" width="10" height="7.5" fill="#21a366" />
    <rect x="11" y="22" width="20" height="7.5" fill="#185c37" />
    <rect x="5" y="11" width="15" height="15" rx="1.5" fill="#0f7b45" />
    <text x="12.5" y="22.5" textAnchor="middle" fontSize="10" fontWeight="700" fill="#fff" fontFamily="Liberation Sans, sans-serif">X</text>
  </DockSvg>
);
const XlsxDoc = () => (
  <DockSvg viewBox="0 0 28 42">
    <path d="M0 0 H18 L28 10 V42 H0 Z" fill="#d2d2d4" />
    <path d="M3 0V42M6 0V42M9 0V42M12 0V42M15 0V42M18 10V42M21 10V42M24 10V42" stroke="#bcbcbe" strokeWidth=".6" />
    <path d="M18 0 V10 H28 Z" fill="#f2f2f2" />
    <text x="14" y="38" textAnchor="middle" fontSize="5.4" fill="#777" fontFamily="Liberation Sans, sans-serif">XLSX</text>
  </DockSvg>
);
const Trash = () => (
  <DockSvg viewBox="0 0 32 42">
    <path d="M2 6 L5 40 C10 42 22 42 27 40 L30 6 Z" fill="#7c7d80" />
    <path d="M9 10L11 38M16 10V39M23 10L21 38" stroke="#95969a" strokeWidth=".8" />
    <ellipse cx="16" cy="6" rx="14.5" ry="4" fill="#4e4f52" />
    <path d="M6 6 L10 1 L14 5 L19 0 L22 4 L27 2 L26 7 L16 8 Z" fill="#e6e6e6" />
  </DockSvg>
);

export default function App() {
  return (
    <>
      <Global />
      <Screen>
        <MenuBar>
          <FaApple size={11} />
          <MenuItem $bold $ml={11}>Excel</MenuItem>
          {['Filer','Rediger','Vis','Indsæt','Formatér','Værktøjer','Data','Vindue','Hjælp'].map(m => <MenuItem key={m}>{m}</MenuItem>)}
          <MenuRight>
            <RecordDot />
            <FaDropbox size={11} />
            <Volume1 size={11} />
            <Wifi size={11} />
            <Search size={9} />
            <CtlCenter />
            <span>ons. 17. aug. 09.12</span>
          </MenuRight>
        </MenuBar>
        <Window>
          <TitleBar>
            <Light $c="#ee5f55" /><Light $c="#f5bd30" /><Light $c="#3fc64a" />
            <QuickIcons>
              <QuickBtn><FaHome size={11} /></QuickBtn>
              <QuickBtn><FaSave size={10} /></QuickBtn>
              <QuickBtn><Undo2 size={12} /><Caret /></QuickBtn>
              <QuickBtn $dim><Redo2 size={12} /></QuickBtn>
              <QuickBtn><Caret /></QuickBtn>
            </QuickIcons>
            <DocTitle><DocGlyph />Meterdata (1)</DocTitle>
            <SheetSearch><Search size={8} color="#ddd" /><Caret />Søg i ark</SheetSearch>
            <TitleUser><User size={13} fill="#eee" /></TitleUser>
          </TitleBar>
          <TabRow>
            <Tab $active $w={40}>Hjem</Tab>
            <Tab $w={49}>Indsæt</Tab>
            <Tab $w={52}>Tegning</Tab>
            <Tab $w={63}>Sidelayout</Tab>
            <Tab $w={51}>Formler</Tab>
            <Tab $w={38}>Data</Tab>
            <Tab $w={64}>Gennemse</Tab>
            <Tab $w={0}>Vis</Tab>
            <ContextTabs><ContextTab>Analysér</ContextTab><ContextTab>Design</ContextTab></ContextTabs>
            <ShareBox><UserPlus size={10} />Del<ChevronUp size={10} /></ShareBox>
          </TabRow>
          <Ribbon>
            <Group $w={101}>
              <PasteCol><PasteIcon />Sæt ind</PasteCol>
              <SmallCol>
                <SmallBtn><Scissors size={10} color="#ddd" />Klip</SmallBtn>
                <SmallBtn><CopyIcon />Kopiér<Caret /></SmallBtn>
                <SmallBtn><BrushIcon />Formatér</SmallBtn>
              </SmallCol>
            </Group>
            <Sep />
            <Group $w={164} $pl={4}>
              <StackCol>
                <RowFlex>
                  <SelectBox $w={71}>Calibri<Caret /></SelectBox>
                  <SelectBox $w={35}>11<Caret /></SelectBox>
                  <SegGroup><Seg $w={20}>A<Caret $c="#6ea7dd" /></Seg><Seg $w={19}>A<Caret $c="#6ea7dd" /></Seg></SegGroup>
                </RowFlex>
                <RowFlex>
                  <SegGroup><Seg $w={20}>F</Seg><Seg $w={20}><Italic>K</Italic></Seg><Seg $w={28}><Under>U</Under><Caret /></Seg></SegGroup>
                  <Seg $w={25}><BorderIcon /><Caret /></Seg>
                  <Seg $w={25}><FillIcon /><Caret /></Seg>
                  <Seg $w={27}><FontColorIcon /><Caret /></Seg>
                </RowFlex>
              </StackCol>
            </Group>
            <Sep />
            <Group $w={115} $pl={6}>
              <StackCol>
                <RowFlex>
                  <SegGroup>
                    <Seg $w={20}><VLines top={1} /></Seg>
                    <Seg $w={19}><VLines top={4} /></Seg>
                    <Seg $w={20} $on><VLines top={7} /></Seg>
                  </SegGroup>
                  <Seg $w={24}><OrientIcon /><Caret /></Seg>
                </RowFlex>
                <RowFlex>
                  <SegGroup>
                    <Seg $w={20}><Lines widths={[12, 8, 12, 8]} /></Seg>
                    <Seg $w={19}><Lines widths={[12, 8, 12, 8]} dir="c" /></Seg>
                    <Seg $w={20}><Lines widths={[12, 8, 12, 8]} dir="r" /></Seg>
                  </SegGroup>
                  <SegGroup>
                    <Seg $w={20}><IndentIcon flip /></Seg>
                    <Seg $w={20}><IndentIcon /></Seg>
                  </SegGroup>
                </RowFlex>
              </StackCol>
            </Group>
            <Sep />
            <Group $w={91} $pl={8}>
              <WrapCol>
                <WrapRow><WrapIcon />Ombryd tekst<CaretGap><Caret /></CaretGap></WrapRow>
                <WrapRow><MergeIcon />Flet og centrer<CaretGap><Caret /></CaretGap></WrapRow>
              </WrapCol>
            </Group>
            <Sep />
            <Group $w={121} $pl={6}>
              <StackCol>
                <SelectBox $w={109}>Standard<Caret /></SelectBox>
                <RowFlex $gap={2}>
                  <PlainBtn $w={24}><CoinsIcon /><Caret /></PlainBtn>
                  <PlainBtn $w={20}><Percent>%</Percent></PlainBtn>
                  <PlainBtn $w={20}><Tiny>000</Tiny></PlainBtn>
                  <SegGroup><Seg $w={19}><DecIcon /></Seg><Seg $w={19}><DecIcon flip /></Seg></SegGroup>
                </RowFlex>
              </StackCol>
            </Group>
            <Sep />
            <Group $w={239} $pl={2}>
              <BigBtn $w={44}><BigIconRow><CondIcon /><Caret /></BigIconRow>{'Betinget\nformatering'}</BigBtn>
              <BigBtn $w={40}><BigIconRow><TableIcon /><Caret /></BigIconRow>{'Formatér\nsom tabel'}</BigBtn>
              <StylesBox>
                <StyleCell $bg="#ffffff" $c="#222">Normal</StyleCell>
                <StyleCell $bg="#c6efce" $c="#2f7d3a">God</StyleCell>
                <StyleCell $bg="#ffeb9c" $c="#8a6414">Neutral</StyleCell>
                <StyleCell $bg="#ffc7ce" $c="#9c0640">Ugyldig</StyleCell>
              </StylesBox>
              <StylesArrow />
            </Group>
            <Sep />
            <Group $w={115} $pl={3}>
              <BigBtn $w={36}><BigIconRow><InsertIcon /><Caret /></BigIconRow>Indsæt</BigBtn>
              <BigBtn $w={36}><BigIconRow><DeleteIcon /><Caret /></BigIconRow>Slet</BigBtn>
              <BigBtn $w={36}><BigIconRow><FormatIcon /><Caret /></BigIconRow>Formatér</BigBtn>
            </Group>
            <Sep />
            <Group $w={150} $pl={11}>
              <SmallCol>
                <SmallBtn $gap={2}><Sigma size={12} color="#ccc" />Autosum<Caret /></SmallBtn>
                <SmallBtn $gap={3}><FillDownIcon />Udfyld<Caret /></SmallBtn>
                <SmallBtn $gap={2}><EraserIcon />Ryd<Caret /></SmallBtn>
              </SmallCol>
              <BigBtn $w={38}><BigIconRow><SortIcon /><Caret /></BigIconRow>{'Sortér\nog filtrer'}</BigBtn>
              <BigBtn $w={32}><BigIconRow><FindIcon /><Caret /></BigIconRow>{'Søg og\nvælg'}</BigBtn>
            </Group>
          </Ribbon>
          <FormulaBar>
            <CellRef>F7</CellRef>
            <Stepper />
            <FxTools><X size={9} /><Check size={9} /><Fx>fx</Fx></FxTools>
            <FormulaInput>0,155178082191781<Caret /></FormulaInput>
          </FormulaBar>
          <Body>
            <SheetCol>
              <Sheet />
              <TabStrip>
                <NavArrows><ChevronLeft size={10} /><ChevronRight size={10} /></NavArrows>
                <SheetTab>Ark1</SheetTab>
                <SheetTab $active>Ark2</SheetTab>
                <SheetTab>Sheet1</SheetTab>
                <AddTab><Plus size={10} strokeWidth={3} /></AddTab>
              </TabStrip>
            </SheetCol>
            <Panel>
              <PanelHead>Pivottabelfelter<CloseBtn><X size={8} strokeWidth={3} /></CloseBtn></PanelHead>
              <FieldHead>FELTNAVN<FieldSearch><Search size={8} />Søg i felter</FieldSearch></FieldHead>
              <FieldWrap>
                <FieldList>
                  {[['Dag', false], ['Måned', false], ['År', true], ['Ugedag', false], ['Uge', false], ['Time', true]].map(([n, on]) => (
                    <FieldRow key={n as string}>
                      <Check9 $on={on as boolean}>{on ? <Check size={8} strokeWidth={4} /> : null}</Check9>{n as string}
                    </FieldRow>
                  ))}
                </FieldList>
                <PanelThumb />
              </FieldWrap>
              <Grip />
              <Areas>
                <AreaCell>
                  <AreaLabel><FaFilter size={9} />Filtre</AreaLabel>
                  <AreaBox />
                </AreaCell>
                <AreaCell>
                  <AreaLabel><ColsGlyph />Kolonner</AreaLabel>
                  <AreaBox><AreaTag>: Time<TagInfo /></AreaTag></AreaBox>
                </AreaCell>
                <AreaCell>
                  <AreaLabel><RowsGlyph />Rækker</AreaLabel>
                  <AreaBox><AreaTag>: År<TagInfo /></AreaTag></AreaBox>
                </AreaCell>
                <AreaCell>
                  <AreaLabel><Sigma size={10} />Værdier</AreaLabel>
                  <AreaBox><AreaTag>: Gennemsnit af...<TagInfo /></AreaTag></AreaBox>
                </AreaCell>
              </Areas>
              <PanelFoot>Træk felter mellem områderne</PanelFoot>
              <DropboxBadge><FaDropbox size={13} /></DropboxBadge>
            </Panel>
          </Body>
          <StatusBar>
            Klar
            <AccessText><Accessibility size={11} />Tilgængelighed: Klar til start</AccessText>
            <StatusRight>
              <ViewBtn $on><ViewGlyph kind={0} /></ViewBtn>
              <ViewBtn><ViewGlyph kind={1} /></ViewBtn>
              <ViewBtn><ViewGlyph kind={2} /></ViewBtn>
              <Minus size={9} strokeWidth={3} />
              <SliderTrack><SliderKnob /></SliderTrack>
              <Plus size={9} strokeWidth={3} />
              <Zoom>100 %</Zoom>
            </StatusRight>
          </StatusBar>
        </Window>
        <Desktop>
          <Dock>
            <DockIcon $w={36} $ml={0} $dot><Finder /></DockIcon>
            <DockIcon $w={36} $ml={10}><Launchpad /></DockIcon>
            <DockIcon $w={36} $ml={10}><Chrome /></DockIcon>
            <DockIcon $w={36} $ml={11}><Notes /></DockIcon>
            <DockIcon $w={36} $ml={11}><TvTile><FaApple size={13} />tv</TvTile></DockIcon>
            <DockIcon $w={44} $ml={6}><Maple /></DockIcon>
            <DockIcon $w={36} $ml={7} $dot><Camera /></DockIcon>
            <DockIcon $w={36} $ml={11}><VSCode /></DockIcon>
            <DockIcon $w={38} $ml={9}><Tex /></DockIcon>
            <DockIcon $w={44} $ml={6}><RLogo /></DockIcon>
            <DockIcon $w={45} $ml={2}><GeoGebra /></DockIcon>
            <DockIcon $w={36} $ml={6}><AppStore /></DockIcon>
            <DockIcon $w={36} $ml={11}><Settings /></DockIcon>
            <DockIcon $w={43} $ml={7}><FileZilla /></DockIcon>
            <DockSep $ml={12} />
            <DockIcon $w={36} $ml={16}><Mail /></DockIcon>
            <DockIcon $w={36} $ml={10}><TextEdit /></DockIcon>
            <DockIcon $w={36} $ml={11} $dot><ExcelLogo /></DockIcon>
            <DockSep $ml={16} />
            <DockIcon $w={28} $ml={18}><XlsxDoc /></DockIcon>
            <DockIcon $w={32} $ml={17}><Trash /></DockIcon>
          </Dock>
        </Desktop>
      </Screen>
    </>
  );
}
